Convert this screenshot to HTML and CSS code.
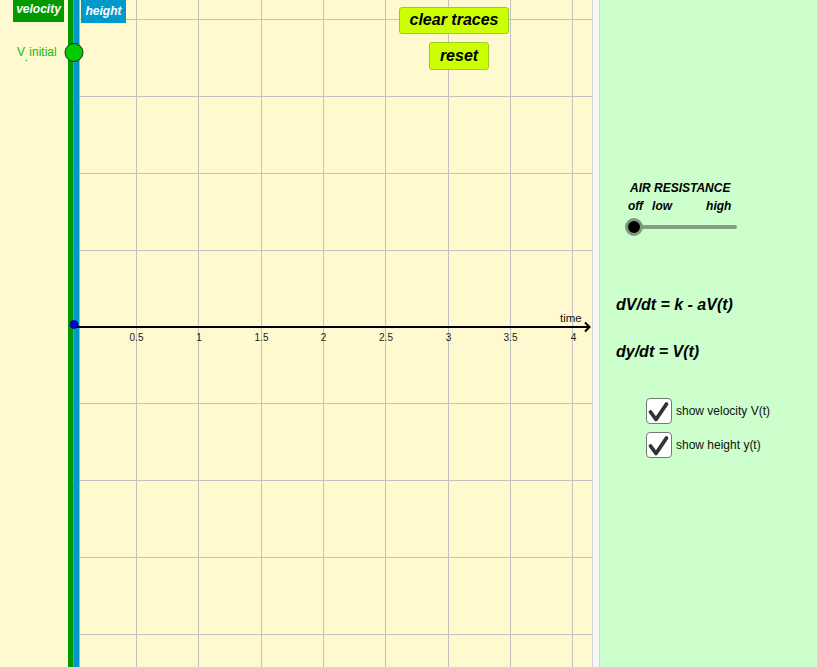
FILE: index.html
```html
<!DOCTYPE html>
<html>
<head>
<meta charset="utf-8">
<link rel="stylesheet" href="styles.css">
</head>
<body>
<div class="app">
  <div class="graph">
    <svg class="canvas" width="592" height="667" viewBox="0 0 592 667">
      <g class="grid">
        <line x1="136.5" y1="0" x2="136.5" y2="667"/>
        <line x1="198.5" y1="0" x2="198.5" y2="667"/>
        <line x1="261.5" y1="0" x2="261.5" y2="667"/>
        <line x1="323.5" y1="0" x2="323.5" y2="667"/>
        <line x1="385.5" y1="0" x2="385.5" y2="667"/>
        <line x1="448.5" y1="0" x2="448.5" y2="667"/>
        <line x1="510.5" y1="0" x2="510.5" y2="667"/>
        <line x1="572.5" y1="0" x2="572.5" y2="667"/>
        <line x1="79" y1="19.5" x2="592" y2="19.5"/>
        <line x1="79" y1="96.5" x2="592" y2="96.5"/>
        <line x1="79" y1="173.5" x2="592" y2="173.5"/>
        <line x1="79" y1="250.5" x2="592" y2="250.5"/>
        <line x1="79" y1="403.5" x2="592" y2="403.5"/>
        <line x1="79" y1="480.5" x2="592" y2="480.5"/>
        <line x1="79" y1="557.5" x2="592" y2="557.5"/>
        <line x1="79" y1="634.5" x2="592" y2="634.5"/>
      </g>
      <rect x="68" y="0" width="5.5" height="667" fill="#009900"/>
      <rect x="73.5" y="0" width="6" height="667" fill="#0099cc"/>
      <line x1="74" y1="327" x2="589" y2="327" stroke="#000" stroke-width="2"/>
      <polyline points="585,322.5 589.5,327 585,331.5" fill="none" stroke="#000" stroke-width="2"/>
      <g class="ticks">
        <text x="136.5" y="341">0.5</text>
        <text x="199" y="341">1</text>
        <text x="261.5" y="341">1.5</text>
        <text x="323.5" y="341">2</text>
        <text x="386" y="341">2.5</text>
        <text x="448.5" y="341">3</text>
        <text x="510.5" y="341">3.5</text>
        <text x="573.5" y="341">4</text>
      </g>
      <text class="timelabel" x="560" y="322">time</text>
      <circle cx="26.5" cy="60.5" r="0.8" fill="#11bb11"/>
      <circle cx="74" cy="52.5" r="9" fill="#00cc00" stroke="#222" stroke-width="1"/>
      <circle cx="74" cy="324.5" r="4" fill="#0000ee" stroke="#000033" stroke-width="0.8"/>
    </svg>
    <div class="tag tag-velocity">velocity</div>
    <div class="tag tag-height">height</div>
    <div class="vinit">V <span class="vsub">initial</span></div>
    <button class="btn btn-clear">clear traces</button>
    <button class="btn btn-reset">reset</button>
  </div>
  <div class="gap"></div>
  <div class="side">
    <div class="air">
      <div class="air-title">AIR RESISTANCE</div>
      <div class="air-labels"><span class="l-off">off</span><span class="l-low">low</span><span class="l-high">high</span></div>
    </div>
    <div class="slider">
      <div class="track"></div>
      <div class="knob"></div>
    </div>
    <div class="eq eq1">dV/dt = k - aV(t)</div>
    <div class="eq eq2">dy/dt = V(t)</div>
    <div class="check check1">
      <span class="box"><svg width="26" height="26" viewBox="0 0 26 26"><polyline points="4.5,14 10,21.5 20.5,6" fill="none" stroke="#333" stroke-width="3.8" stroke-linecap="round" stroke-linejoin="round"/></svg></span>
      <span class="check-label">show velocity V(t)</span>
    </div>
    <div class="check check2">
      <span class="box"><svg width="26" height="26" viewBox="0 0 26 26"><polyline points="4.5,14 10,21.5 20.5,6" fill="none" stroke="#333" stroke-width="3.8" stroke-linecap="round" stroke-linejoin="round"/></svg></span>
      <span class="check-label">show height y(t)</span>
    </div>
  </div>
</div>
</body>
</html>
```
FILE: styles.css
```css
html, body {
  margin: 0;
  padding: 0;
  width: 817px;
  height: 667px;
  overflow: hidden;
  font-family: "Liberation Sans", Arial, sans-serif;
}
.app {
  display: flex;
  width: 817px;
  height: 667px;
}
.graph {
  position: relative;
  width: 592px;
  height: 667px;
  background: #fff9cf;
  flex: none;
}
.canvas {
  display: block;
}
.grid line {
  stroke: #c2c2c2;
  stroke-width: 1;
}
.ticks text {
  font-family: "Liberation Sans", Arial, sans-serif;
  font-size: 10px;
  fill: #222;
  text-anchor: middle;
}
.timelabel {
  font-family: "Liberation Sans", Arial, sans-serif;
  font-size: 11.5px;
  fill: #111;
}
.tag {
  position: absolute;
  top: 0;
  color: #fff;
  font-weight: bold;
  font-style: italic;
  font-size: 12px;
  box-sizing: border-box;
  text-align: center;
}
.tag-velocity {
  left: 13px;
  width: 51px;
  height: 22px;
  line-height: 18px;
  background: #009900;
}
.tag-height {
  left: 81px;
  width: 45px;
  height: 23px;
  line-height: 22px;
  background: #0099cc;
}
.vinit {
  position: absolute;
  left: 17px;
  top: 45px;
  font-size: 12px;
  line-height: 14px;
  color: #11bb11;
  white-space: nowrap;
}
.vinit .vsub {
  margin-left: 1px;
}
.btn {
  position: absolute;
  margin: 0;
  padding: 0 0 1px 0;
  box-sizing: border-box;
  background: #ccff00;
  border: 1px solid #9acc2a;
  border-radius: 3px;
  font-family: "Liberation Sans", Arial, sans-serif;
  font-weight: bold;
  font-style: italic;
  font-size: 16px;
  color: #000;
  text-align: center;
}
.btn-clear {
  left: 399px;
  top: 7px;
  width: 110px;
  height: 27px;
}
.btn-reset {
  left: 429px;
  top: 42px;
  width: 60px;
  height: 28px;
}
.gap {
  flex: none;
  width: 6px;
  height: 667px;
  background: #f7f7f7;
  border-left: 1px solid #d6d6d6;
}
.side {
  flex: 1;
  height: 667px;
  background: #ccffcc;
  border-left: 1px solid #c0e0c0;
  display: flex;
  flex-direction: column;
  align-items: flex-start;
}
.air {
  margin-top: 181px;
  padding-left: 30px;
  font-weight: bold;
  font-style: italic;
  font-size: 12px;
  line-height: 14px;
  color: #000;
}
.air-labels {
  margin-top: 4px;
  margin-left: -2px;
  display: flex;
  white-space: nowrap;
}
.l-low {
  margin-left: 9px;
}
.l-high {
  margin-left: 34px;
}
.slider {
  position: relative;
  margin-top: 5px;
  margin-left: 25px;
  width: 113px;
  height: 18px;
  display: flex;
  align-items: center;
}
.track {
  margin-left: 9px;
  width: 103px;
  height: 4px;
  background: #83a083;
  border-radius: 2px;
}
.knob {
  position: absolute;
  left: 0;
  top: 0;
  width: 12px;
  height: 12px;
  border-radius: 50%;
  background: #000;
  border: 3px solid #7f9a7f;
}
.eq {
  padding-left: 16px;
  font-weight: bold;
  font-style: italic;
  font-size: 16px;
  line-height: 20px;
  color: #000;
  white-space: nowrap;
}
.eq1 {
  margin-top: 59px;
}
.eq2 {
  margin-top: 27px;
}
.check {
  display: flex;
  align-items: center;
  padding-left: 46px;
}
.check1 {
  margin-top: 36px;
}
.check2 {
  margin-top: 8px;
}
.box {
  display: block;
  width: 26px;
  height: 26px;
  box-sizing: border-box;
  border: 1.5px solid #777;
  border-radius: 4px;
  background: #fff;
  position: relative;
}
.box svg {
  position: absolute;
  left: -1.5px;
  top: -1.5px;
}
.check-label {
  margin-left: 4px;
  font-size: 12px;
  color: #111;
  white-space: nowrap;
}
```
